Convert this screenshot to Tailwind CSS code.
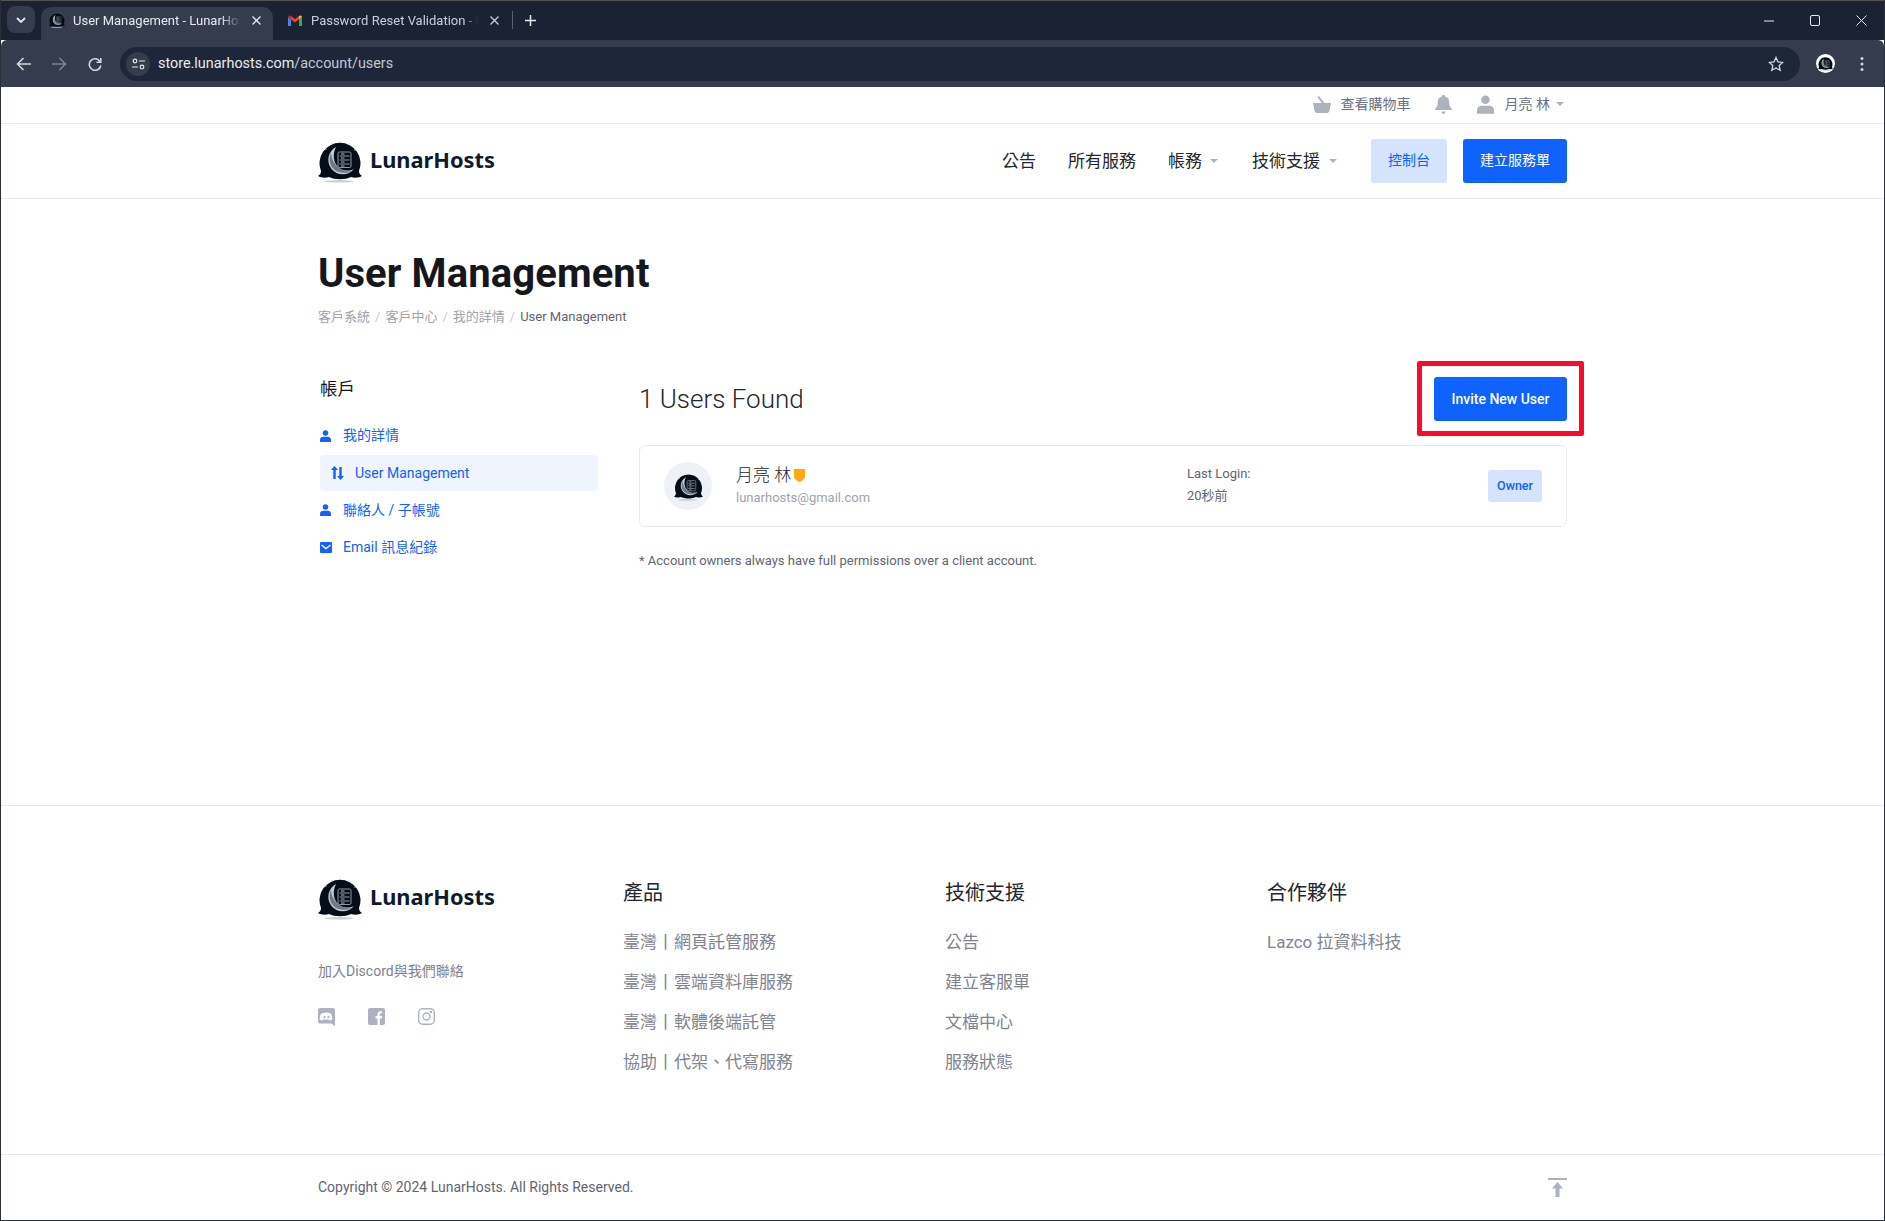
<!DOCTYPE html>
<html lang="zh-Hant">
<head>
<meta charset="utf-8">
<title>User Management - LunarHosts</title>
<script src="https://cdn.jsdelivr.net/npm/@tailwindcss/browser@4"></script>
</head>
<body class="bg-white">
<svg width="0" height="0" class="absolute">
  <defs>
    <symbol id="logo" viewBox="0 0 44 44">
      <ellipse cx="21" cy="42.300" rx="15" ry="1.200" fill="#c9d0d6"/>
      <path d="M0 37c2-1 3-3 3-5A20.500 20.500 0 1 1 41 32c0 2 1 4 3 5-3 2-8 2-11 1-6 3-16 3-22 0-3 1-8 1-11-1z" fill="#050d18"/>
      <path d="M18 8A14.500 14.500 0 1 0 36 30c-3 1.500-6 1.800-9 1.300C17 30 13 18 18 8z" fill="#c3cad2"/>
      <path d="M13 14c-3 7-1 14 5 18 5 2.300 11 2.300 16 .500-10 1-20-6-21-18.500z" fill="#6d7987"/>
      <rect x="20" y="13" width="13" height="15.500" rx="1.500" fill="#050d18" stroke="#8f99a5" stroke-width="1"/>
      <path d="M21.500 17h10M21.500 21h10M21.500 25h10" stroke="#8f99a5" stroke-width="1.100"/>
      <path d="M23 15h3.500M23 19h3.500M23 23h3.500M23 27h3.500" stroke="#dfe3e8" stroke-width=".8"/>
      <g fill="#cbd3da"><circle cx="14" cy="4.500" r=".7"/><circle cx="22" cy="3" r=".7"/><circle cx="31" cy="5" r=".7"/><circle cx="8" cy="10" r=".7"/><circle cx="37" cy="11" r=".7"/></g>
    </symbol>
    <symbol id="person" viewBox="0 0 12 13">
      <circle cx="6" cy="3.200" r="3"/>
      <path d="M0 13v-2.500C0 8.500 1.600 7.300 3.500 7.300h5c1.900 0 3.500 1.200 3.500 3.200V13z"/>
    </symbol>
    <symbol id="caret" viewBox="0 0 8 4"><path d="M0 0h8L4 4z"/></symbol>
  </defs>
</svg>

<div class="w-[1885px] h-[1221px] flex flex-col overflow-hidden border-x border-b border-[#2b2f38] text-[#15171c] [font-family:Roboto,'Noto_Sans_CJK_TC',sans-serif]">

  <!-- browser chrome -->
  <div class="h-[40px] bg-[#1a2234] flex items-end pl-[6px] border-t border-[#55534f] text-[#e6e9ef] text-[13px]">
    <div class="w-[28px] h-[27px] mb-[7px] rounded-[8px] bg-[#343c4d] flex items-center justify-center">
      <svg width="10" height="6" viewBox="0 0 10 6" fill="none" stroke="#e6e9ef" stroke-width="1.800"><path d="M1 1l4 4 4-4"/></svg>
    </div>
    <div class="ml-[6px] w-[232px] h-[33px] pb-[7px] rounded-t-[10px] bg-[#343c4d] flex items-center pl-[8px]">
      <svg width="16" height="16"><use href="#logo"/></svg>
      <span class="ml-[8px] w-[168px] pt-[2px] whitespace-nowrap [mask-image:linear-gradient(90deg,#000_88%,transparent)]">User Management - LunarHos</span>
      <svg class="ml-[11px]" width="9" height="9" viewBox="0 0 9 9" stroke="#e6e9ef" stroke-width="1.300"><path d="M.5.500l8 8M8.500.5l-8 8"/></svg>
    </div>
    <div class="w-[240px] h-[33px] pb-[7px] flex items-center pl-[15px] text-[#c9cfda]">
      <svg width="14" height="11" viewBox="0 0 14 11"><path d="M0 2v9h3V4.500z" fill="#4285f4"/><path d="M11 4.500V11h3V2z" fill="#34a853"/><path d="M3 4.500L7 7.500l4-3V1l-4 3-4-3z" fill="#ea4335"/><path d="M11 1v3.500L14 2c0-1.500-2-2-3-1z" fill="#fbbc04"/><path d="M3 1v3.500L0 2c0-1.500 2-2 3-1z" fill="#c5221f"/></svg>
      <span class="ml-[9px] w-[167px] pt-[2px] whitespace-nowrap [mask-image:linear-gradient(90deg,#000_92%,transparent)]">Password Reset Validation - lu</span>
      <svg class="ml-[12px]" width="9" height="9" viewBox="0 0 9 9" stroke="#c9cfda" stroke-width="1.300"><path d="M.5.500l8 8M8.500.5l-8 8"/></svg>
      <div class="ml-[13px] w-px h-[18px] bg-[#596172]"></div>
    </div>
    <div class="h-[33px] pb-[7px] flex items-center ml-[12px]">
      <svg width="11" height="11" viewBox="0 0 11 11" stroke="#e6e9ef" stroke-width="1.500"><path d="M5.500 0v11M0 5.500h11"/></svg>
    </div>
    <div class="flex-1"></div>
    <div class="h-[33px] flex items-center mb-[3px]">
      <svg width="10" height="2" viewBox="0 0 10 2" stroke="#e6e9ef"><path d="M0 1h10"/></svg>
      <svg class="ml-[36px]" width="10" height="11" viewBox="0 0 10 11" fill="none" stroke="#e6e9ef"><rect x=".5" y=".5" width="9" height="10" rx="1.500"/></svg>
      <svg class="ml-[36px] mr-[17px]" width="11" height="11" viewBox="0 0 11 11" stroke="#e6e9ef"><path d="M.5.500l10 10M10.500.5l-10 10"/></svg>
    </div>
  </div>
  <div class="h-[47px] bg-[#343c4d] flex items-center rounded-t-[6px] pl-[15px]">
    <svg width="16" height="14" viewBox="0 0 16 14" fill="none" stroke="#d3d8e0" stroke-width="1.600"><path d="M15 7H2M7.500 1L1.500 7l6 6"/></svg>
    <svg class="ml-[19px]" width="16" height="14" viewBox="0 0 16 14" fill="none" stroke="#7b8393" stroke-width="1.600"><path d="M1 7h13M8.500 1l6 6-6 6"/></svg>
    <svg class="ml-[21px]" width="14" height="14" viewBox="0 0 14 14" fill="none" stroke="#d3d8e0" stroke-width="1.600"><path d="M12.300 5A5.800 5.800 0 1 0 12.800 8.500"/><path d="M12.800 1v4.300H8.500" /></svg>
    <div class="ml-[18px] w-[1680px] h-[34px] rounded-full bg-[#1e2739] flex items-center pl-[6px]">
      <div class="w-[24px] h-[24px] rounded-full bg-[#343c4d] flex items-center justify-center">
        <svg width="13" height="12" viewBox="0 0 13 12" fill="none" stroke="#e6e9ef" stroke-width="1.200"><circle cx="3" cy="3" r="1.800"/><path d="M7 3h6M0 9h6"/><circle cx="10" cy="9" r="1.800"/></svg>
      </div>
      <span class="ml-[8px] text-[14.400px] text-[#e8ebf0] whitespace-nowrap">store.lunarhosts.com<span class="text-[#c3c8d2]">/account/users</span></span>
      <div class="flex-1"></div>
      <svg class="mr-[16px]" width="16" height="16" viewBox="0 0 16 16" fill="none" stroke="#d3d8e0" stroke-width="1.300"><path d="M8 1.500l2 4.400 4.700.5-3.500 3.200 1 4.700L8 11.900l-4.200 2.400 1-4.700L1.300 6.400 6 5.900z"/></svg>
    </div>
    <div class="ml-[16px] w-[19px] h-[19px] rounded-full bg-white flex items-center justify-center">
      <svg width="15" height="15"><use href="#logo"/></svg>
    </div>
    <svg class="ml-[25px]" width="4" height="16" viewBox="0 0 4 16" fill="#d3d8e0"><circle cx="2" cy="2.500" r="1.500"/><circle cx="2" cy="8" r="1.500"/><circle cx="2" cy="13.500" r="1.500"/></svg>
  </div>

  <!-- utility bar -->
  <div class="h-[36px] shrink-0 w-[1249px] mx-auto pb-[2px] flex items-center justify-end text-[14px] text-[#6b7080]">
    <svg width="18" height="17" viewBox="0 0 18 17" fill="#aeb2bd"><path d="M6 0l5.500 7H18l-1.500 7.500c-.2 1.500-1.200 2.500-2.500 2.500H4c-1.300 0-2.300-1-2.500-2.500L0 7h8.800L4.500 1.200z"/></svg>
    <span class="ml-[10px]">查看購物車</span>
    <svg class="ml-[24px]" width="17" height="19" viewBox="0 0 17 19" fill="#aeb2bd"><path d="M8.500 0c1 0 1.600.7 1.600 1.600 2.700.7 4.100 3 4.100 5.700 0 3.500 1 5 2.800 6.700v1H0v-1c1.800-1.700 2.800-3.200 2.800-6.700 0-2.700 1.400-5 4.100-5.700C6.900.7 7.500 0 8.500 0z"/><path d="M6.500 16.500h4c0 1.500-1 2.500-2 2.500s-2-1-2-2.500z"/></svg>
    <svg class="ml-[25px]" width="17" height="19" fill="#aeb2bd"><use href="#person"/></svg>
    <span class="ml-[11px]">月亮 林</span>
    <svg class="ml-[6px] mr-[3px]" width="8" height="4" fill="#aeb2bd"><use href="#caret"/></svg>
  </div>
  <div class="h-px bg-[#e9eaec] shrink-0"></div>

  <!-- header -->
  <div class="h-[75px] shrink-0 border-b border-[#e9eaec]">
    <div class="w-[1249px] h-full mx-auto flex items-center text-[17px] text-[#23262d]">
      <a class="flex items-center">
        <svg width="44" height="44"><use href="#logo"/></svg>
        <span class="ml-[8px] pb-[2px] text-[21.800px] font-bold text-[#0f1b2a] [font-family:'Noto_Sans',sans-serif]">LunarHosts</span>
      </a>
      <div class="flex-1"></div>
      <a class="pt-[2px]">公告</a>
      <a class="ml-[32px] pt-[2px]">所有服務</a>
      <a class="ml-[32px] pt-[2px]">帳務</a>
      <svg class="ml-[8px]" width="8" height="4" fill="#aeb2bd"><use href="#caret"/></svg>
      <a class="ml-[34px] pt-[2px]">技術支援</a>
      <svg class="ml-[9px]" width="8" height="4" fill="#aeb2bd"><use href="#caret"/></svg>
      <a class="ml-[34px] w-[76px] h-[44px] pb-[2px] rounded-[3px] bg-[#d6e3fd] text-[#1062fe] text-[14px] flex items-center justify-center">控制台</a>
      <a class="ml-[16px] w-[104px] h-[44px] pb-[2px] rounded-[3px] bg-[#1062fe] text-white text-[14px] flex items-center justify-center">建立服務單</a>
    </div>
  </div>

  <!-- main -->
  <main class="flex-1 w-[1249px] mx-auto">
    <h1 class="mt-[51px] text-[40px] leading-[48px] font-bold tracking-[.1px] text-[#15171c]">User Management</h1>
    <div class="mt-[9px] h-[20px] flex items-center text-[13px] text-[#a0a3ac]">
      <span>客戶系統</span><span class="mx-[5px] text-[#c9cbd1]">/</span><span>客戶中心</span><span class="mx-[5px] text-[#c9cbd1]">/</span><span>我的詳情</span><span class="mx-[5px] text-[#c9cbd1]">/</span><span class="text-[#5f6571]">User Management</span>
    </div>
    <div class="mt-[50px] flex">
      <aside class="w-[321px] pl-[2px]">
        <h2 class="text-[17.500px] leading-[24px] font-normal">帳戶</h2>
        <ul class="mt-[17px] w-[278px] flex flex-col gap-px text-[14px] text-[#1062fe]">
          <li class="h-[36px] pb-[1px] flex items-center">
            <svg width="11" height="12" fill="#1062fe"><use href="#person"/></svg>
            <span class="ml-[12px]">我的詳情</span>
          </li>
          <li class="h-[36px] flex items-center rounded-[4px] bg-[#f0f4fd] pl-[11px]">
            <svg width="13" height="14" viewBox="0 0 13 14" fill="#1062fe"><path d="M3.500 0L7 4H4.700v9H2.300V4H0z"/><path d="M9.500 14L6 10h2.300V1h2.400v9H13z"/></svg>
            <span class="ml-[11px]">User Management</span>
          </li>
          <li class="h-[36px] flex items-center">
            <svg width="11" height="12" fill="#1062fe"><use href="#person"/></svg>
            <span class="ml-[12px]">聯絡人 / 子帳號</span>
          </li>
          <li class="h-[36px] flex items-center">
            <svg width="12" height="11" viewBox="0 0 12 11"><rect width="12" height="11" rx="1" fill="#1062fe"/><path d="M1.500 3L6 6.500 10.500 3" fill="none" stroke="#fff" stroke-width="1.400"/></svg>
            <span class="ml-[11px]">Email 訊息紀錄</span>
          </li>
        </ul>
      </aside>
      <section class="w-[928px]">
        <div class="h-[44px] flex items-center justify-between">
          <h2 class="text-[26px] font-light text-[#23262d] leading-[44px]">1 Users Found</h2>
          <div class="relative">
            <a class="w-[133px] h-[44px] rounded-[3px] bg-[#1062fe] text-white text-[14px] font-medium flex items-center justify-center">Invite New User</a>
            <div class="absolute left-[-17px] top-[-16px] w-[167px] h-[75px] border-[5px] border-[#fb0a2e] rounded-[2px]"></div>
          </div>
        </div>
        <div class="mt-[24px] h-[82px] rounded-[6px] border border-[#e9eaec] flex items-center pl-[24px] pr-[24px]">
          <div class="w-[48px] h-[48px] rounded-full bg-[#eef1f7] flex items-center justify-center">
            <svg width="29" height="29"><use href="#logo"/></svg>
          </div>
          <div class="ml-[24px] w-[451px]">
            <div class="flex items-center text-[17px] leading-[24px] font-light text-[#23262d] -mt-[1px] mb-[1px]">月亮 林
              <svg class="ml-[3px]" width="11" height="13" viewBox="0 0 11 13" fill="#fcab0a"><path d="M0 0h11v7.500c0 2.500-3 4.300-5.500 5.500C3 11.800 0 10 0 7.500z"/></svg>
            </div>
            <div class="text-[13px] leading-[20px] text-[#a0a3ac]">lunarhosts@gmail.com</div>
          </div>
          <div class="text-[13px] leading-[22px] text-[#5f6571] pb-[2px]">
            <div>Last Login:</div>
            <div>20秒前</div>
          </div>
          <div class="flex-1"></div>
          <span class="w-[54px] h-[32px] rounded-[3px] bg-[#d6e3fd] text-[#1062fe] text-[12.500px] font-medium flex items-center justify-center">Owner</span>
        </div>
        <p class="mt-[24px] text-[13px] leading-[20px] text-[#5f6571]">* Account owners always have full permissions over a client account.</p>
      </section>
    </div>
  </main>

  <!-- footer -->
  <footer class="shrink-0 border-t border-[#e9eaec]">
    <div class="w-[1249px] h-[348px] mx-auto flex pt-[70px]">
      <div class="w-[305px]">
        <a class="flex items-center">
          <svg width="44" height="44"><use href="#logo"/></svg>
          <span class="ml-[8px] pb-[2px] text-[21.800px] font-bold text-[#0f1b2a] [font-family:'Noto_Sans',sans-serif]">LunarHosts</span>
        </a>
        <p class="mt-[41px] text-[14px] leading-[20px] text-[#7e828e]">加入Discord與我們聯絡</p>
        <div class="mt-[27px] flex gap-[33px]">
          <svg width="17" height="18" viewBox="0 0 17 18"><path d="M2 0h13a2 2 0 0 1 2 2v16l-4-2.500H2a2 2 0 0 1-2-2V2a2 2 0 0 1 2-2z" fill="#aeb2c0"/><path d="M4 5.500c3-1.500 6-1.500 9 0 1 2 1.300 4 1.300 6-1 .8-2 1-3 1l-.7-1.200c-1.700.5-3.500.5-5.200 0l-.7 1.200c-1 0-2-.2-3-1 0-2 .3-4 1.300-6z" fill="#fff"/><circle cx="6.500" cy="9" r="1.100" fill="#aeb2c0"/><circle cx="10.500" cy="9" r="1.100" fill="#aeb2c0"/></svg>
          <svg width="17" height="17" viewBox="0 0 17 17"><rect width="17" height="17" rx="2" fill="#aeb2c0"/><path d="M9.500 17v-6.500H7.500V8h2V6.200c0-2 1.200-3 3-3 .8 0 1.500.1 1.500.1v2h-1c-1 0-1.200.5-1.200 1.200V8h2.200l-.4 2.500H11.800V17z" fill="#fff"/></svg>
          <svg width="17" height="17" viewBox="0 0 17 17" fill="none" stroke="#aeb2c0" stroke-width="1.400"><rect x=".7" y=".7" width="15.600" height="15.600" rx="4"/><circle cx="8.500" cy="8.500" r="3.500"/><circle cx="13" cy="4" r=".6" fill="#aeb2c0"/></svg>
        </div>
      </div>
      <div class="w-[322px] pt-[3px]">
        <h3 class="text-[20px] leading-[28px] font-normal text-[#23262d]">產品</h3>
        <ul class="mt-[16px] text-[17px] text-[#80848f]">
          <li class="h-[40px] flex items-center">臺灣丨網頁託管服務</li>
          <li class="h-[40px] flex items-center">臺灣丨雲端資料庫服務</li>
          <li class="h-[40px] flex items-center">臺灣丨軟體後端託管</li>
          <li class="h-[40px] flex items-center">協助丨代架、代寫服務</li>
        </ul>
      </div>
      <div class="w-[322px] pt-[3px]">
        <h3 class="text-[20px] leading-[28px] font-normal text-[#23262d]">技術支援</h3>
        <ul class="mt-[16px] text-[17px] text-[#80848f]">
          <li class="h-[40px] flex items-center">公告</li>
          <li class="h-[40px] flex items-center">建立客服單</li>
          <li class="h-[40px] flex items-center">文檔中心</li>
          <li class="h-[40px] flex items-center">服務狀態</li>
        </ul>
      </div>
      <div class="flex-1 pt-[3px]">
        <h3 class="text-[20px] leading-[28px] font-normal text-[#23262d]">合作夥伴</h3>
        <ul class="mt-[16px] text-[17px] text-[#80848f]">
          <li class="h-[40px] flex items-center">Lazco 拉資料科技</li>
        </ul>
      </div>
    </div>
    <div class="border-t border-[#e9eaec] h-[66px]">
      <div class="w-[1249px] h-full mx-auto flex items-center justify-between text-[14px] text-[#5f6571]">
        <span>Copyright © 2024 LunarHosts. All Rights Reserved.</span>
        <svg width="19" height="19" viewBox="0 0 19 19" fill="#aeb2c0"><rect width="19" height="2"/><path d="M9.500 4L15 10.500h-3.500V19h-4V10.500H4z"/></svg>
      </div>
    </div>
  </footer>
</div>
</body>
</html>
